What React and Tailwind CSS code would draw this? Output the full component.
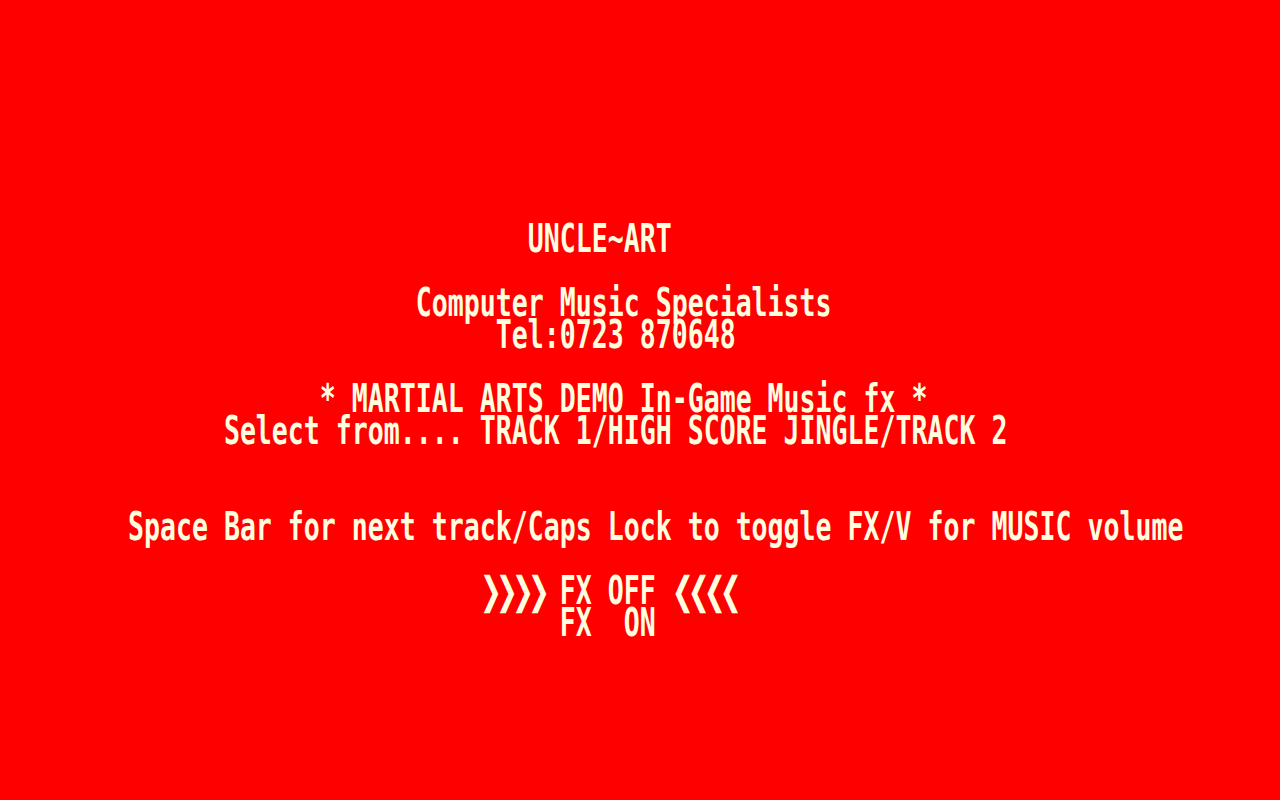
import React from 'react';

// 80x25 text screen, each cell 16x32
const SCREEN = [
  '',
  '',
  '',
  '',
  '',
  '',
  '',
  '                                 UNCLE~ART',
  '',
  '                          Computer Music Specialists',
  '                               Tel:0723 870648',
  '',
  '                    * MARTIAL ARTS DEMO In-Game Music fx *',
  '              Select from.... TRACK 1/HIGH SCORE JINGLE/TRACK 2',
  '',
  '',
  '        Space Bar for next track/Caps Lock to toggle FX/V for MUSIC volume',
  '',
  null, // arrows line, drawn separately
  '                                   FX  ON',
  '',
  '',
  '',
  '',
  '',
];

const Row = ({ children }) => (
  <div className="h-8 leading-[32px] whitespace-pre">
    <span className="inline-block scale-y-[1.445] origin-[0_18.8px]">{children}</span>
  </div>
);

const Chevron = ({ dir }) => (
  <span className="inline-block w-4 text-center font-['DejaVu_Sans',sans-serif]">
    {dir === 'right' ? '\u276F' : '\u276E'}
  </span>
);

export default function App() {
  return (
    <div className="w-[1280px] h-[800px] overflow-hidden bg-[#ff0000] text-[#ffffe0] font-['DejaVu_Sans_Mono',monospace] font-bold text-[26.576px]">
      {SCREEN.map((line, i) =>
        line === null ? (
          <Row key={i}>
            {'                              '}
            <Chevron dir="right" />
            <Chevron dir="right" />
            <Chevron dir="right" />
            <Chevron dir="right" />
            {' FX OFF '}
            <Chevron dir="left" />
            <Chevron dir="left" />
            <Chevron dir="left" />
            <Chevron dir="left" />
          </Row>
        ) : (
          <Row key={i}>{line || ' '}</Row>
        )
      )}
    </div>
  );
}
